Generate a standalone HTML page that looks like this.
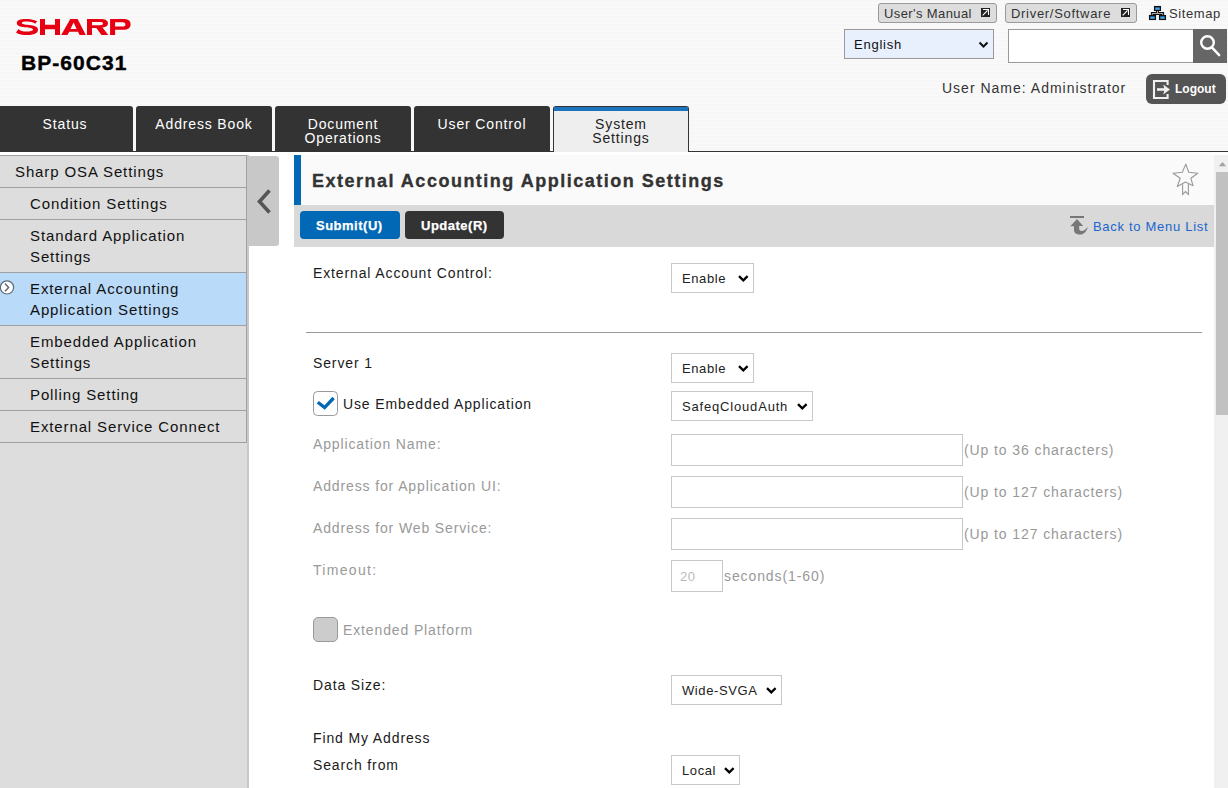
<!DOCTYPE html>
<html><head><meta charset="utf-8">
<style>
*{box-sizing:border-box;margin:0;padding:0}
html,body{width:1228px;height:788px;overflow:hidden;background:#fff;font-family:"Liberation Sans",sans-serif;color:#333}
.a{position:absolute;white-space:nowrap;line-height:1}
#hdr{position:absolute;left:0;top:0;width:1228px;height:152px;background:repeating-linear-gradient(180deg,#f7f7f7 0,#f7f7f7 2px,#f9f9f9 2px,#f9f9f9 4px)}
.tab{position:absolute;top:106px;height:45px;width:136px;background:#333;border-radius:3px 3px 0 0;color:#fff;font-size:14px;letter-spacing:.85px;text-align:center}
.tab span{position:absolute;left:0;right:0;line-height:14px}
.nav{position:absolute;left:0;width:247px;border-top:1px solid #a0a0a0;border-right:1px solid #a0a0a0;background:#dddddd}
.ni{position:absolute;left:0;width:246px;border-bottom:1px solid #a0a0a0;font-size:15px;letter-spacing:.88px;color:#111}
.ni span{position:absolute;left:30px;line-height:21px}
.lbl{position:absolute;left:313px;font-size:14px;letter-spacing:.87px;color:#1a1a1a;line-height:14px;white-space:nowrap}
.dis{color:#999}
.sel{position:absolute;left:671px;height:30px;border:1px solid #c8c8c8;background:#fff;font-size:13px;letter-spacing:.6px;color:#222}
.sel span{position:absolute;left:10px;top:8px;line-height:13px}
.sel svg.cv{position:absolute;right:4px;top:11px}
.inp{position:absolute;left:671px;width:292px;height:32px;border:1px solid #c8c8c8;background:#fff}
.hint{position:absolute;left:964px;font-size:14px;letter-spacing:.9px;color:#999;line-height:14px;white-space:nowrap}
</style></head><body>
<div id="hdr"></div>
<!-- SHARP logo -->
<svg class="a" style="left:0;top:0" width="140" height="40" viewBox="0 0 140 40"><g fill="#e60012" fill-rule="evenodd">
<path d="M37.2,21.2 C34,19.3 29,18.9 26,18.9 C20,18.9 16.8,20.3 16.8,23 C16.8,26 20,26.7 25,27.3 C29,27.8 33,28 33,29.6 C33,31 30,31.6 26.5,31.6 C23,31.6 20,30.8 18.5,29 L16,32.4 C18.5,34.3 22.5,35 27,35 C33.5,35 38,33.5 38,29.8 C38,26.5 34.5,25.5 29,24.9 C24.5,24.4 21.8,24.2 21.8,22.9 C21.8,21.9 24,21.5 27,21.5 C30.5,21.5 33.5,22.2 35.2,23.7 Z"/>
<path d="M40,19H45V24.7H55V19H60V35H55V29.2H45V35H40Z"/>
<path d="M61.2,35L70.3,18.9H77.6L85.8,35H79.6L78,31.8H69.3L67.4,35Z M70.5,28.9H76.6L73.6,22.6Z"/>
<path d="M87,18.9H100C105,18.9 108,20.3 108,23.3C108,25.8 106,27.2 102.5,27.6L108.3,35H101.5L96.3,27.9H92V35H87Z M92,22H100C102,22 103,22.6 103,23.6C103,24.7 102,25.3 100,25.3H92Z"/>
<path d="M110.1,18.9H123C128,18.9 130.6,20.6 130.6,24.3C130.6,28 128,29.8 123,29.8H115.1V35H110.1Z M115.1,22.2H122.5C124.5,22.2 125.4,23 125.4,24.4C125.4,25.8 124.5,26.6 122.5,26.6H115.1Z"/>
</g></svg>
<div class="a" style="left:21px;top:52px;font-size:21px;font-weight:bold;color:#000;letter-spacing:1.05px;line-height:21px;-webkit-text-stroke:.4px #000">BP-60C31</div>

<!-- top right -->
<div class="a" style="left:878px;top:3px;width:119px;height:20px;background:#ddd;border:1px solid #999;border-radius:3px"></div>
<div class="a" style="left:884px;top:7px;font-size:13px;letter-spacing:.4px;color:#333;line-height:13px">User's Manual</div>
<div class="a" style="left:1005px;top:3px;width:132px;height:20px;background:#ddd;border:1px solid #999;border-radius:3px"></div>
<div class="a" style="left:1011px;top:7px;font-size:13px;letter-spacing:.7px;color:#333;line-height:13px">Driver/Software</div>
<div class="a" style="left:1169px;top:7px;font-size:13px;letter-spacing:.6px;color:#333;line-height:13px">Sitemap</div>

<div class="a" style="left:844px;top:29px;width:150px;height:30px;background:#e8f0fe;border:1px solid #999"></div>
<div class="a" style="left:854px;top:38px;font-size:13px;letter-spacing:.75px;color:#111;line-height:13px">English</div>
<div class="a" style="left:1008px;top:29px;width:185px;height:34px;background:#fff;border:1px solid #999;border-right:none"></div>
<div class="a" style="left:1193px;top:29px;width:34px;height:34px;background:#666"></div>

<div class="a" style="left:942px;top:81px;font-size:14px;letter-spacing:1px;color:#333;line-height:14px">User Name: Administrator</div>
<div class="a" style="left:1146px;top:74px;width:80px;height:30px;background:#555;border-radius:6px"></div>
<div class="a" style="left:1175px;top:83px;font-size:12px;font-weight:bold;letter-spacing:0;color:#fff;line-height:12px">Logout</div>

<!-- header icons -->
<svg class="a" style="left:0;top:0" width="1228" height="110" viewBox="0 0 1228 110">
<g id="ext"><rect x="981" y="8" width="9" height="9" fill="#222"/><path d="M983,9H989V15H988V10H983Z" fill="#fff"/><path d="M982.7,15.3L987.6,10.4" stroke="#fff" stroke-width="1.2"/></g>
<use href="#ext" x="140"/>
<path d="M1157.5,10.5V13.5M1152.3,15.5V13.5H1162.7V15.5" fill="none" stroke="#111" stroke-width="2.8"/>
<path d="M1157.5,10.8V13.5M1152.3,15.3V13.5H1162.7V15.3" fill="none" stroke="#aaa" stroke-width="1"/>
<defs><linearGradient id="bg1" x1="0" y1="0" x2="0" y2="1"><stop offset="0" stop-color="#0060b0"/><stop offset=".45" stop-color="#3a9ee8"/><stop offset="1" stop-color="#6cc8ff"/></linearGradient></defs>
<g fill="url(#bg1)" stroke="#111" stroke-width="1.3">
<rect x="1154.6" y="6.6" width="5.8" height="3.8"/>
<rect x="1149.6" y="15.6" width="5.8" height="3.8"/>
<rect x="1159.6" y="15.6" width="5.8" height="3.8"/>
</g>
<path d="M979.5,42.5L983.5,46.5L987.5,42.5" fill="none" stroke="#111" stroke-width="2"/>
<g fill="none" stroke="#fff" stroke-width="2.4"><circle cx="1207.5" cy="42.5" r="6.3"/><path d="M1211.6,47.2L1219.2,55.2" stroke-linecap="round"/></g>
<g fill="none" stroke="#f0f0f0"><path d="M1167.6,85V81H1154V98H1167.6V94" stroke-width="2.1"/><path d="M1157,89.5H1165" stroke-width="2.6"/></g>
<path d="M1163.2,84.5L1170,89.5L1163.2,94.5L1164.6,89.5Z" fill="#f0f0f0"/>
</svg>
<!-- tabs -->
<div class="tab" style="left:-3px"><span style="top:11px">Status</span></div>
<div class="tab" style="left:136px"><span style="top:11px">Address Book</span></div>
<div class="tab" style="left:275px"><span style="top:11px">Document<br>Operations</span></div>
<div class="tab" style="left:414px"><span style="top:11px">User Control</span></div>
<div class="a" style="left:0;top:151px;width:1228px;height:1px;background:#333"></div>
<div class="tab" style="left:553px;width:136px;height:46px;background:#eee;border:1px solid #333;border-bottom:none;color:#222"><div style="position:absolute;left:0;right:0;top:0;height:4px;background:#1e73be"></div><span style="top:10px">System<br>Settings</span></div>

<!-- left column -->
<div class="a" style="left:0;top:155px;width:249px;height:633px;background:#dddddd;border-right:2px solid #c8c8c8"></div>
<div class="nav" style="top:155px;height:288px"></div>
<div class="ni" style="top:156px;height:32px"><span style="left:15px;top:5px">Sharp OSA Settings</span></div>
<div class="ni" style="top:188px;height:32px"><span style="top:5px">Condition Settings</span></div>
<div class="ni" style="top:220px;height:53px"><span style="top:5px">Standard Application<br>Settings</span></div>
<div class="ni" style="top:273px;height:53px;background:#b9daf9"><span style="top:5px">External Accounting<br>Application Settings</span></div>
<div class="ni" style="top:326px;height:53px"><span style="top:5px">Embedded Application<br>Settings</span></div>
<div class="ni" style="top:379px;height:32px"><span style="top:5px">Polling Setting</span></div>
<div class="ni" style="top:411px;height:32px"><span style="top:5px">External Service Connect</span></div>
<!-- collapse -->
<div class="a" style="left:247px;top:156px;width:32px;height:90px;background:#c8c8c8;border-radius:0 3px 3px 0"></div>

<!-- title -->
<div class="a" style="left:294px;top:155px;width:920px;height:50px;background:#fafafa"></div>
<div class="a" style="left:294px;top:155px;width:7px;height:50px;background:#0068b4"></div>
<div class="a" style="left:312px;top:172px;font-size:18px;font-weight:bold;letter-spacing:1.5px;color:#333;line-height:18px;-webkit-text-stroke:.35px #333">External Accounting Application Settings</div>
<!-- toolbar -->
<div class="a" style="left:294px;top:205px;width:920px;height:42px;background:#d9d9d9"></div>
<div class="a" style="left:300px;top:211px;width:100px;height:28px;background:#0068b4;border-radius:4px"></div>
<div class="a" style="left:316px;top:219px;font-size:13px;font-weight:bold;letter-spacing:.5px;color:#fff;line-height:13px;-webkit-text-stroke:.25px #fff">Submit(U)</div>
<div class="a" style="left:405px;top:211px;width:99px;height:28px;background:#333;border-radius:4px"></div>
<div class="a" style="left:421px;top:219px;font-size:13px;font-weight:bold;letter-spacing:.5px;color:#fff;line-height:13px;-webkit-text-stroke:.25px #fff">Update(R)</div>
<div class="a" style="left:1093px;top:220px;font-size:13px;letter-spacing:.7px;color:#1a66cc;line-height:13px">Back to Menu List</div>

<!-- content icons -->
<svg class="a" style="left:0;top:150px" width="1228" height="110" viewBox="0 150 1228 110">
<path d="M1185.8,164.1L1188.7,172.3L1197.8,173.2L1190.9,178.3L1193,185.7L1185.5,182L1177.3,186.5L1180.2,178.3L1173,173.2L1182.3,172.3Z" fill="none" stroke="#999" stroke-width="1.1" stroke-linejoin="round"/>
<path d="M1182.6,184.2V194.5L1185.5,191.6L1188.4,194.5V183.9" fill="none" stroke="#999" stroke-width="1.1"/>
<rect x="1070" y="216" width="14" height="2" fill="#777"/>
<path d="M1077,219L1070.3,226.2H1074V230C1074,233 1076.5,234.5 1080,234.5C1084,234.5 1087,231 1087.8,226.7C1086,229.5 1083.5,231 1081.5,231C1080,231 1079.2,230 1079.2,228.5V226H1083.2Z" fill="#777"/>
<path d="M269.5,190.5L259.5,201.5L269.5,212.5" fill="none" stroke="#555" stroke-width="3.6"/>
</svg>
<svg class="a" style="left:0;top:278px" width="16" height="18" viewBox="0 278 16 18">
<circle cx="7" cy="287.4" r="6.6" fill="#fff" stroke="#5f6b78" stroke-width="1.2"/>
<path d="M5,283.5L8.6,287.4L5,291.3" fill="none" stroke="#5f6b78" stroke-width="1.5"/>
</svg>
<!-- form -->
<div class="lbl" style="top:266px">External Account Control:</div>
<div class="sel" style="top:263px;width:83px"><span>Enable</span><svg class="cv" width="11" height="7" viewBox="0 0 11 7"><path d="M1,1.2L5.3,5.3L9.6,1.2" fill="none" stroke="#000" stroke-width="2.3"/></svg></div>
<div class="a" style="left:306px;top:332px;width:896px;height:1px;background:#999"></div>
<div class="lbl" style="top:356px">Server 1</div>
<div class="sel" style="top:353px;width:83px"><span>Enable</span><svg class="cv" width="11" height="7" viewBox="0 0 11 7"><path d="M1,1.2L5.3,5.3L9.6,1.2" fill="none" stroke="#000" stroke-width="2.3"/></svg></div>
<div class="a" style="left:313px;top:391px;width:25px;height:25px;background:#fff;border:1.3px solid #999;border-radius:4.5px"></div>
<svg class="a" style="left:313px;top:391px" width="25" height="25" viewBox="313 391 25 25"><path d="M317.8,402.2L324.6,407.6L333.6,398" fill="none" stroke="#0068b4" stroke-width="3.3"/></svg>
<div class="lbl" style="left:343px;top:397px">Use Embedded Application</div>
<div class="sel" style="top:391px;width:142px"><span style="letter-spacing:.82px">SafeqCloudAuth</span><svg class="cv" width="11" height="7" viewBox="0 0 11 7"><path d="M1,1.2L5.3,5.3L9.6,1.2" fill="none" stroke="#000" stroke-width="2.3"/></svg></div>
<div class="lbl dis" style="top:437px">Application Name:</div>
<div class="inp" style="top:434px"></div>
<div class="hint" style="top:443px">(Up to 36 characters)</div>
<div class="lbl dis" style="top:479px">Address for Application UI:</div>
<div class="inp" style="top:476px"></div>
<div class="hint" style="top:485px">(Up to 127 characters)</div>
<div class="lbl dis" style="top:521px">Address for Web Service:</div>
<div class="inp" style="top:518px"></div>
<div class="hint" style="top:527px">(Up to 127 characters)</div>
<div class="lbl dis" style="top:563px;letter-spacing:1.3px">Timeout:</div>
<div class="inp" style="top:560px;width:52px"></div>
<div class="a" style="left:680px;top:570px;font-size:13px;letter-spacing:.6px;color:#bbb;line-height:13px">20</div>
<div class="hint" style="left:724px;top:569px">seconds(1-60)</div>
<div class="a" style="left:313px;top:617px;width:25px;height:25px;background:#ccc;border:1px solid #999;border-radius:5px"></div>
<div class="lbl dis" style="left:343px;top:623px">Extended Platform</div>
<div class="lbl" style="top:678px">Data Size:</div>
<div class="sel" style="top:675px;width:111px"><span>Wide-SVGA</span><svg class="cv" width="11" height="7" viewBox="0 0 11 7"><path d="M1,1.2L5.3,5.3L9.6,1.2" fill="none" stroke="#000" stroke-width="2.3"/></svg></div>
<div class="lbl" style="top:731px">Find My Address</div>
<div class="lbl" style="top:758px">Search from</div>
<div class="sel" style="top:755px;width:69px"><span>Local</span><svg class="cv" width="11" height="7" viewBox="0 0 11 7"><path d="M1,1.2L5.3,5.3L9.6,1.2" fill="none" stroke="#000" stroke-width="2.3"/></svg></div>

<!-- scrollbar -->
<div class="a" style="left:1214px;top:155px;width:14px;height:633px;background:#f0f0f0"></div>
<div class="a" style="left:1216px;top:172px;width:12px;height:243px;background:#c1c1c1"></div>
<svg class="a" style="left:1214px;top:155px" width="14" height="16" viewBox="1214 155 14 16"><path d="M1218.8,166.2L1222.5,162L1226.2,166.2Z" fill="#a3a3a3"/></svg>
</body></html>
